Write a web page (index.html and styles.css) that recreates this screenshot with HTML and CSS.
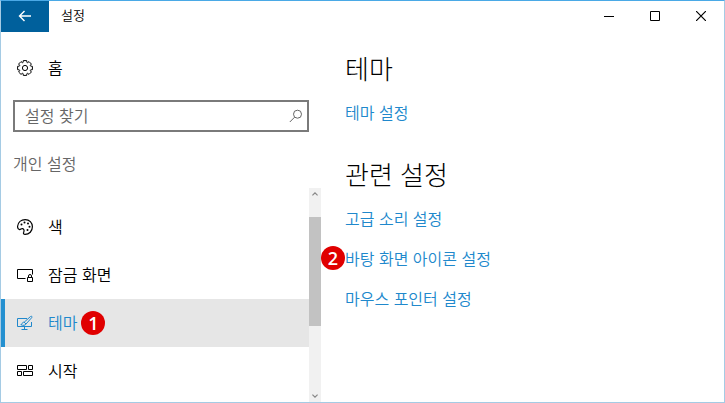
FILE: index.html
```html
<!DOCTYPE html>
<html lang="ko">

<head>
    <meta charset="UTF-8">
    <meta name="viewport" content="width=device-width, initial-scale=1.0">
    <title>설정</title>
    <link rel="stylesheet" href="styles.css">
</head>

<body>
    <div class="window">
        <header class="titlebar">
            <button class="back" type="button" aria-label="뒤로">
                <svg width="14" height="12" viewBox="0 0 14 12" fill="none" stroke="currentColor" stroke-width="1.4">
                    <path d="M13 6H1.5M6.5 1L1.5 6l5 5" />
                </svg>
            </button>
            <span class="title">설정</span>
            <div class="controls">
                <button type="button" aria-label="최소화">
                    <svg width="10" height="10" viewBox="0 0 10 10" fill="none" stroke="currentColor">
                        <path d="M0 5.5h10" />
                    </svg>
                </button>
                <button type="button" aria-label="최대화">
                    <svg width="10" height="10" viewBox="0 0 10 10" fill="none" stroke="currentColor">
                        <path d="M.5 .5h9v9h-9z" />
                    </svg>
                </button>
                <button type="button" aria-label="닫기">
                    <svg width="10" height="10" viewBox="0 0 10 10" fill="none" stroke="currentColor" stroke-width="1.2">
                        <path d="M0 0l10 10M10 0L0 10" />
                    </svg>
                </button>
            </div>
        </header>

        <div class="body">
            <aside class="sidebar">
                <a class="item" href="#">
                    <svg class="icon" width="16" height="16" viewBox="0 0 16 16" fill="none" stroke="currentColor" stroke-linejoin="round">
                        <path d="M6.1 2.4L6.3 .6H9.7L9.9 2.4L10.6 2.7L12 1.6L14.4 4L13.3 5.4L13.6 6.1L15.4 6.3V9.7L13.6 9.9L13.3 10.6L14.4 12L12 14.4L10.6 13.3L9.9 13.6L9.7 15.4H6.3L6.1 13.6L5.4 13.3L4 14.4L1.6 12L2.7 10.6L2.4 9.9L.6 9.7V6.3L2.4 6.1L2.7 5.4L1.6 4L4 1.6L5.4 2.7z" />
                        <circle cx="8" cy="8" r="2.6" />
                    </svg>
                    <span>홈</span>
                </a>
                <form class="search">
                    <input type="text" placeholder="설정 찾기" aria-label="설정 찾기">
                    <svg width="14" height="14" viewBox="0 0 14 14" fill="none" stroke="currentColor">
                        <circle cx="8.5" cy="5.2" r="4" />
                        <path d="M5.6 8.2L.8 13" />
                    </svg>
                </form>
                <div class="group">개인 설정</div>
                <div class="scroll">
                    <nav class="list">
                        <a class="item" href="#">
                            <svg class="icon" width="16" height="16" viewBox="0 0 16 16" fill="none" stroke="currentColor" stroke-width="1.2">
                                <path d="M.6 7.2C1 3.2 4.2 .6 8.2 .6c4.2 0 7.2 3.1 7.2 7.2 0 4.3-3.2 7.6-7.3 7.6-1.6 0-1.9-1.2-1.4-2.2.7-1.6 .3-3.4-1.2-3.6-1.3-.2-1.8 1.2-3 1C1 10.4 .5 8.7 .6 7.2z" />
                                <g fill="currentColor" stroke="none">
                                    <circle cx="4.5" cy="5.5" r="1" />
                                    <circle cx="7.5" cy="3.5" r="1" />
                                    <circle cx="11" cy="4.5" r="1" />
                                    <circle cx="12.5" cy="7.8" r="1" />
                                    <circle cx="10.5" cy="11" r="1" />
                                </g>
                            </svg>
                            <span>색</span>
                        </a>
                        <a class="item" href="#">
                            <svg class="icon" width="16" height="16" viewBox="0 0 16 16" fill="none" stroke="currentColor">
                                <path d="M8.5 11.5h-8v-9h15v5" />
                                <path d="M10.5 10.5h5v4h-5zM11.5 10.5v-1.5a1.5 1.5 0 0 1 3 0v1.5" />
                            </svg>
                            <span>잠금 화면</span>
                        </a>
                        <a class="item active" href="#">
                            <svg class="icon" width="16" height="16" viewBox="0 0 16 16" fill="none" stroke="currentColor">
                                <path d="M10 3.5H.5v8h14V7M7.5 11.5v3M4.5 14.5h6" />
                                <path d="M7.2 7.2l6.3-5.7c1-.8 2 .1 1.2 1.2L9 9z" />
                                <path d="M7.2 7.2c-1.5-.2-2 .8-2.2 1.6-.2.6-.7.8-1.2.8 1.8 1.3 5 .8 5.2-.6z" />
                            </svg>
                            <span>테마</span>
                            <b class="badge">1</b>
                        </a>
                        <a class="item" href="#">
                            <svg class="icon" width="16" height="16" viewBox="0 0 16 16" fill="none" stroke="currentColor">
                                <path d="M.5 2.5h9v4h-9zM11.5 2.5h4v4h-4zM.5 8.5h4v4h-4zM6.5 8.5h9v4h-9z" />
                            </svg>
                            <span>시작</span>
                        </a>
                    </nav>
                    <div class="scrollbar">
                        <svg width="6" height="4" viewBox="0 0 6 4" fill="none" stroke="currentColor" stroke-width="1.3">
                            <path d="M.4 3.4L3 .9l2.6 2.5" />
                        </svg>
                        <div class="track">
                            <div class="thumb"></div>
                        </div>
                        <svg width="6" height="4" viewBox="0 0 6 4" fill="none" stroke="currentColor" stroke-width="1.3">
                            <path d="M.4 .6L3 3.1 5.6 .6" />
                        </svg>
                    </div>
                </div>
            </aside>

            <main class="content">
                <section>
                    <h2>테마</h2>
                    <a href="#">테마 설정</a>
                </section>
                <section>
                    <h2>관련 설정</h2>
                    <a href="#">고급 소리 설정</a>
                    <a href="#"><b class="badge">2</b>바탕 화면 아이콘 설정</a>
                    <a href="#">마우스 포인터 설정</a>
                </section>
            </main>
        </div>
    </div>
</body>

</html>
```
FILE: styles.css
```css
* {
    box-sizing: border-box;
    margin: 0;
    padding: 0;
}

body {
    font-family: "Noto Sans CJK KR", sans-serif;
    font-size: 16px;
    font-weight: 350;
    line-height: 24px;
    color: #000;
    background: #fff;
}

a {
    color: inherit;
    text-decoration: none;
}

button {
    border: 0;
    background: none;
    color: inherit;
}

svg {
    display: block;
    flex: none;
}

.window {
    display: flex;
    flex-direction: column;
    min-height: 100vh;
    border: 1px solid #a5cbe4;
    border-top-color: #4aa9e6;
}

/* title bar */
.titlebar {
    display: flex;
    height: 31px;
}

.back {
    display: flex;
    align-items: center;
    justify-content: center;
    width: 48px;
    padding-bottom: 2px;
    color: #fff;
    background: #00609c;
}

.title {
    margin-left: 12px;
    font-size: 13px;
    line-height: 28px;
}

.controls {
    display: flex;
    margin-left: auto;
}

.controls button {
    display: flex;
    align-items: center;
    justify-content: center;
    width: 46px;
    padding-bottom: 2px;
}

.body {
    display: flex;
    flex: 1;
}

/* left side */
.sidebar {
    display: flex;
    flex-direction: column;
    width: 320px;
    padding-top: 12px;
}

.item {
    display: flex;
    align-items: center;
    height: 48px;
    padding-left: 16px;
}

.item span {
    padding-bottom: 2px;
}

.icon {
    margin-right: 15px;
}

.search {
    display: flex;
    align-items: center;
    height: 32px;
    margin: 8px 12px 0;
    padding: 0 4px 0 10px;
    border: 2px solid #7a7a7a;
    color: #666;
}

.search input {
    flex: 1;
    min-width: 0;
    padding-bottom: 3px;
    border: 0;
    outline: 0;
    background: none;
    font: inherit;
    color: #000;
}

.search input::placeholder {
    color: #666;
    opacity: 1;
}

.group {
    margin: 19px 12px 13px;
    color: #666;
}

.scroll {
    display: flex;
    flex: 1;
}

.list {
    flex: 1;
    padding-top: 15px;
}

.active {
    padding-left: 12px;
    border-left: 4px solid #2490d0;
    color: #2088cc;
    background: #e6e6e6;
}

.scrollbar {
    display: flex;
    flex-direction: column;
    align-items: center;
    width: 12px;
    padding: 4px 0;
    color: #888;
    background: #f1f1f1;
}

.track {
    flex: 1;
    width: 100%;
    padding-top: 21px;
}

.thumb {
    height: 109px;
    background: #c2c2c2;
}

/* right side */
.content {
    flex: 1;
    padding: 20px 24px;
}

section {
    display: flex;
    flex-direction: column;
    align-items: flex-start;
    gap: 16px;
    margin-bottom: 34px;
}

h2 {
    font-size: 26px;
    font-weight: 300;
    line-height: 32px;
}

section a {
    position: relative;
    color: #2088cc;
}

.badge {
    width: 24px;
    height: 24px;
    border-radius: 50%;
    font-family: "Open Sans", sans-serif;
    font-size: 18px;
    font-weight: 600;
    line-height: 24px;
    text-align: center;
    color: #fff;
    background: #e00000;
}

.item .badge {
    margin-left: 4px;
}

section .badge {
    position: absolute;
    top: 0;
    right: 100%;
}
```
